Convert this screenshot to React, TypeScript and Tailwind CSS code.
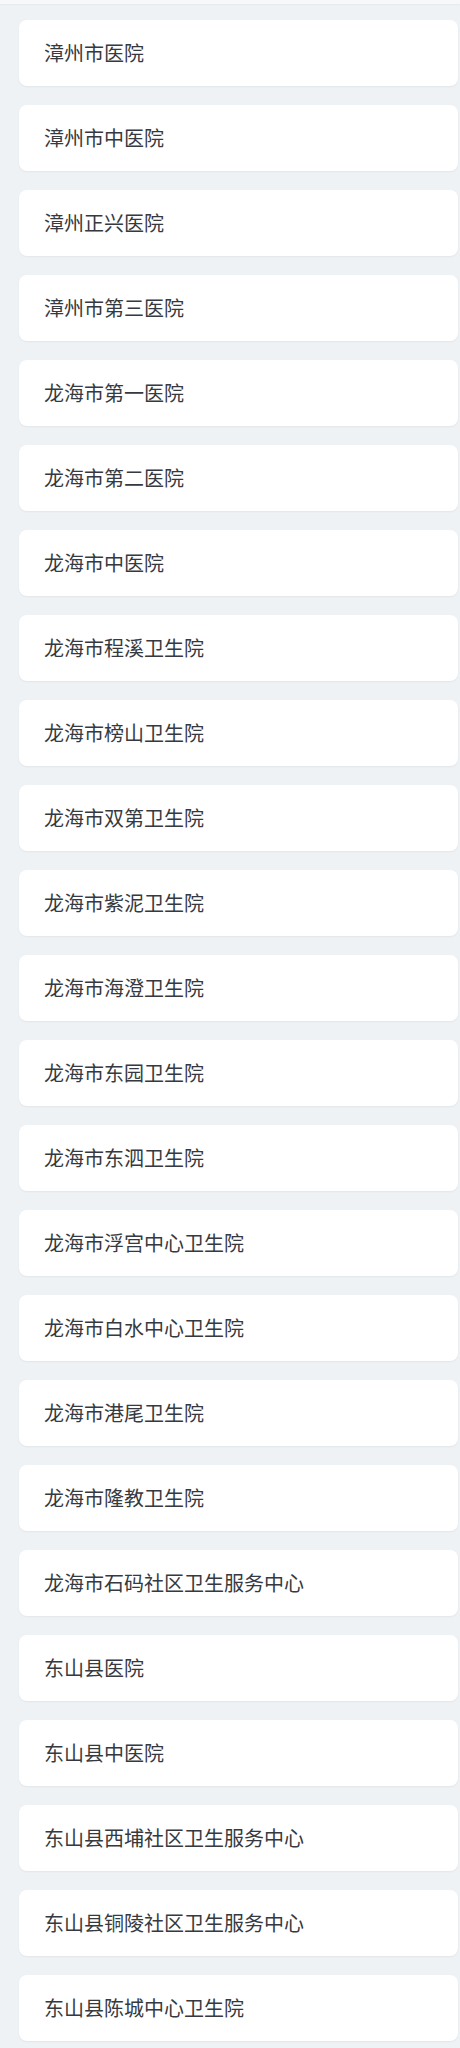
import React from "react";

const names = [
  "漳州市医院",
  "漳州市中医院",
  "漳州正兴医院",
  "漳州市第三医院",
  "龙海市第一医院",
  "龙海市第二医院",
  "龙海市中医院",
  "龙海市程溪卫生院",
  "龙海市榜山卫生院",
  "龙海市双第卫生院",
  "龙海市紫泥卫生院",
  "龙海市海澄卫生院",
  "龙海市东园卫生院",
  "龙海市东泗卫生院",
  "龙海市浮宫中心卫生院",
  "龙海市白水中心卫生院",
  "龙海市港尾卫生院",
  "龙海市隆教卫生院",
  "龙海市石码社区卫生服务中心",
  "东山县医院",
  "东山县中医院",
  "东山县西埔社区卫生服务中心",
  "东山县铜陵社区卫生服务中心",
  "东山县陈城中心卫生院",
];

export default function App() {
  return (
    <div
      className="min-h-[2048px] bg-[#eef2f5]"
      style={{ fontFamily: '"Noto Sans CJK SC", "Noto Sans", sans-serif' }}
    >
      <div className="h-[4px] bg-[#f6f8fa] shadow-[0_1px_2px_rgba(0,0,0,0.04)]" />
      <div className="flex flex-col gap-[19px] pt-[16px] pl-[19px] pr-[2px]">
        {names.map((n) => (
          <div
            key={n}
            className="flex h-[66px] items-center rounded-[8px] bg-white pl-[25px] text-[20px] text-[#363a40] shadow-[0_1px_2px_rgba(0,0,0,0.05)]"
          >
            {n}
          </div>
        ))}
      </div>
    </div>
  );
}
